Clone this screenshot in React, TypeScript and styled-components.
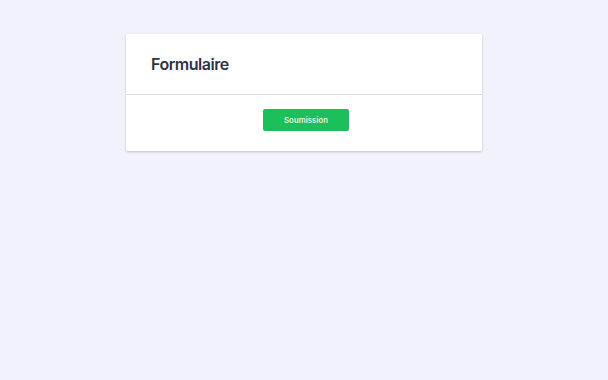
import React from "react";
import styled, { createGlobalStyle } from "styled-components";

const Global = createGlobalStyle`
  html, body { margin: 0; padding: 0; }
  body {
    background: #f1f2fc;
    font-family: Inter, "Noto Sans", sans-serif;
    width: 608px;
    height: 380px;
  }
`;

const Page = styled.div`
  display: flex;
  justify-content: center;
  padding-top: 34px;
`;

const Card = styled.div`
  width: 356px;
  background: #ffffff;
  border-radius: 2px;
  box-shadow: 0 1px 3px rgba(30, 40, 90, 0.16), 0 1px 2px rgba(30, 40, 90, 0.08);
`;

const Header = styled.div`
  height: 61px;
  box-sizing: border-box;
  display: flex;
  align-items: center;
  padding: 0 25px;
  border-bottom: 1px solid #dcdcec;
`;

const Title = styled.h1`
  margin: 0;
  font-family: Inter, sans-serif;
  font-size: 16px;
  font-weight: 600;
  color: #2d3347;
  letter-spacing: -0.45px;
`;

const Footer = styled.div`
  display: flex;
  justify-content: center;
  padding: 14px 0 20px 4px;
`;

const Button = styled.button`
  width: 86px;
  height: 22px;
  border: none;
  border-radius: 2px;
  background: #1cbf5a;
  color: #f4fff8;
  font-family: Inter, sans-serif;
  font-size: 7.8px;
  font-weight: 500;
  letter-spacing: 0.1px;
  cursor: pointer;
`;

export default function App() {
  return (
    <>
      <Global />
      <Page>
        <Card>
          <Header>
            <Title>Formulaire</Title>
          </Header>
          <Footer>
            <Button>Soumission</Button>
          </Footer>
        </Card>
      </Page>
    </>
  );
}
